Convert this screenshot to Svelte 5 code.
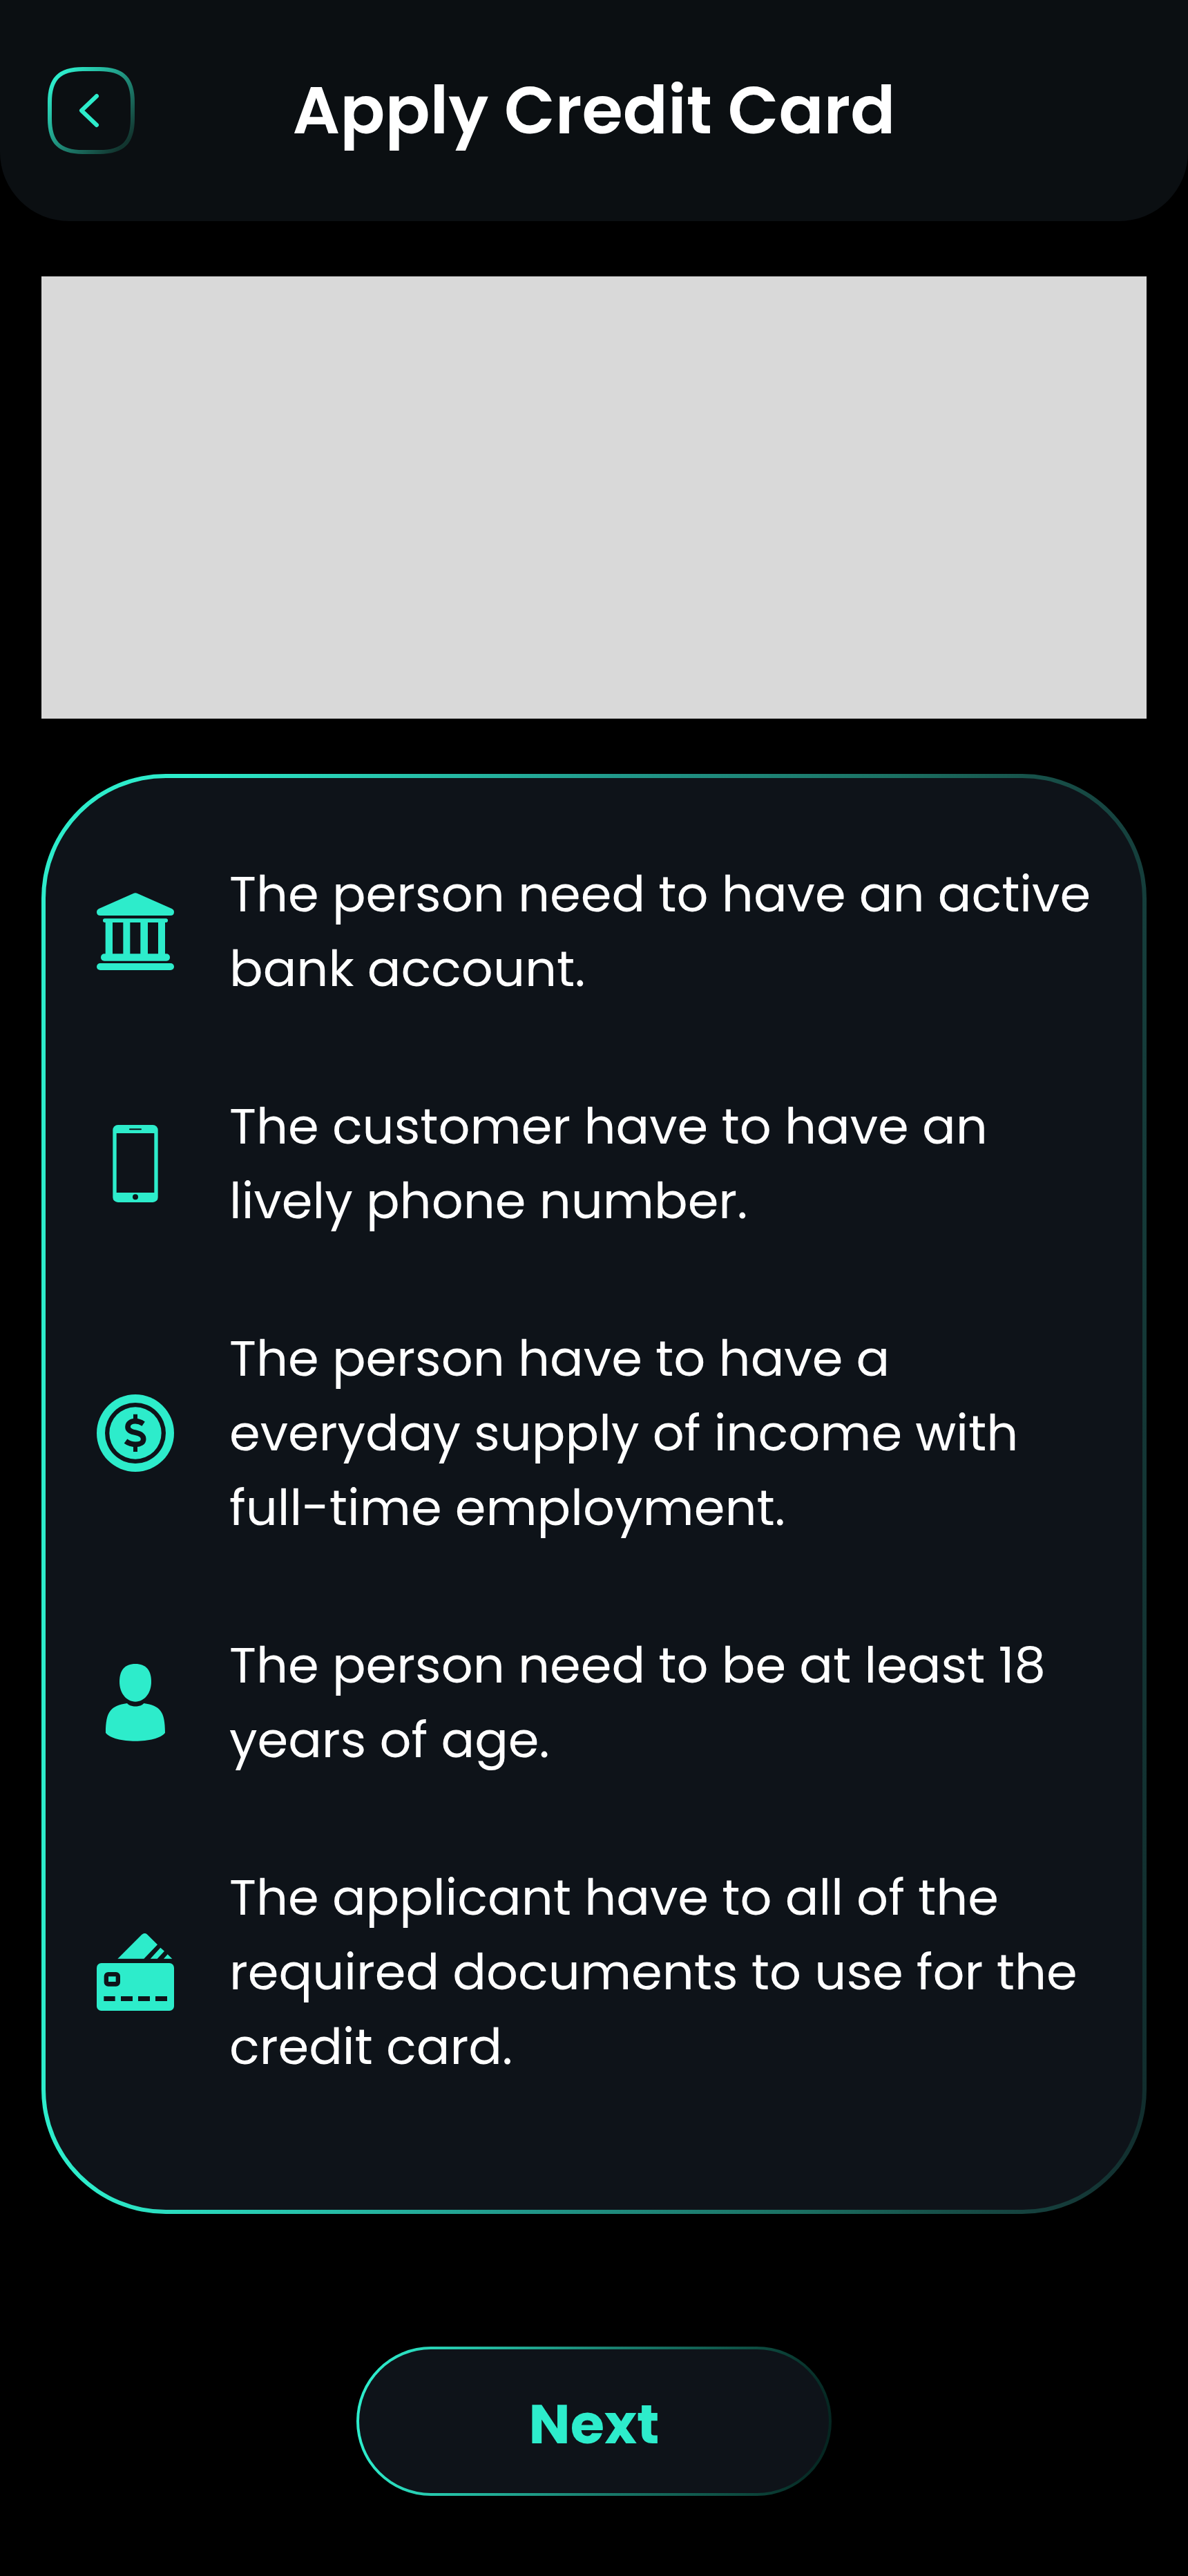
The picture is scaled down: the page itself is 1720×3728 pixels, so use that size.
<script>
  const requirements = [
    { icon: 'bank', text: 'The person need to have an active bank account.' },
    { icon: 'phone', text: 'The customer have to have an lively phone number.' },
    { icon: 'coin', text: 'The person have to have a everyday supply of income with full-time employment.' },
    { icon: 'person', text: 'The person need to be at least 18 years of age.' },
    { icon: 'card', text: 'The applicant have to all of the required documents to use for the credit card.' }
  ];
</script>

<div class="page">
  <header>
    <button class="back" type="button" aria-label="Back">
      <svg viewBox="0 0 126 126" fill="none" aria-hidden="true">
        <defs>
          <linearGradient id="back-edge" x1="0" y1="0" x2="1" y2="1">
            <stop offset="0.1" stop-color="#2deccb" />
            <stop offset="0.9" stop-color="#12352f" />
          </linearGradient>
        </defs>
        <path
          d="M3 51C3 17 17 3 51 3H75C109 3 123 17 123 51V75C123 109 109 123 75 123H51C17 123 3 109 3 75Z"
          stroke="url(#back-edge)"
          stroke-width="6"
        />
        <path d="M71 42L49 63L71 84" stroke="#2deccb" stroke-width="6" stroke-linecap="round" stroke-linejoin="round" />
      </svg>
    </button>
    <h1>Apply Credit Card</h1>
  </header>

  <main>
    <div class="banner"></div>

    <ul class="card">
      {#each requirements as item}
        <li>
          <svg class="icon" viewBox="0 0 336 336" aria-hidden="true">
            {#if item.icon === 'bank'}
              <path d="M161 2Q168 -1 175 2L326 69Q336 74 336 84Q336 99 320 99H16Q0 99 0 84Q0 74 10 69Z" />
              <rect x="27" y="112" width="282" height="17" rx="8" />
              <path d="M38 124H69V270H38ZM115 124H145V270H115ZM190 124H222V270H190ZM267 124H297V270H267Z" />
              <rect x="18" y="265" width="300" height="31" rx="15" />
              <rect y="306" width="336" height="30" rx="15" />
            {:else if item.icon === 'phone'}
              <rect x="70" width="196" height="336" rx="22" />
              <rect class="cut" x="86" y="36" width="164" height="258" />
              <rect class="cut" x="141" y="16" width="54" height="6" rx="3" />
              <circle class="cut" cx="168" cy="313" r="12" />
            {:else if item.icon === 'coin'}
              <circle cx="168" cy="168" r="168" />
              <circle class="cut" cx="168" cy="168" r="132" />
              <circle cx="168" cy="168" r="113" />
              <path class="cut" d="M159 86H177V114H159ZM159 220H177V249H159Z" />
              <path
                class="sign"
                d="M203 128C191 120 180 116 168 116C148 116 135 126 135 141C135 157 150 162 169 166C191 171 203 178 203 194C203 209 189 217 169 217C152 217 138 212 126 203"
              />
            {:else if item.icon === 'person'}
              <path d="M168 0C215 0 237 28 237 78C237 128 206 164 168 164C130 164 99 128 99 78C99 28 121 0 168 0Z" />
              <path d="M132 171C146 189 190 189 205 171C275 182 297 205 297 299C262 347 74 347 39 299C39 205 62 182 132 171Z" />
            {:else}
              <path d="M91 110L195 6Q208 -6 220 5L264 49L205 110ZM233 110L277 62L294 77L263 110ZM291 110L308 91L328 110Z" />
              <rect y="129" width="336" height="207" rx="20" />
              <rect class="cut" x="32" y="168" width="70" height="62" rx="18" />
              <rect x="51" y="187" width="32" height="23" />
              <path class="cut" d="M31 273H80V294H31ZM105 273H156V294H105ZM180 273H231V294H180ZM255 273H306V294H255Z" />
            {/if}
          </svg>
          <p>{item.text}</p>
        </li>
      {/each}
    </ul>

    <button class="next" type="button">Next</button>
  </main>
</div>

<style>
  :global(body) {
    margin: 0;
    background: #000;
  }

  .page {
    min-height: 100vh;
    box-sizing: border-box;
    padding-bottom: 116px;
    background: #000;
    color: #fff;
    font-family: Poppins, Inter, 'Liberation Sans', sans-serif;
  }

  header {
    display: grid;
    grid-template-columns: 1fr auto 1fr;
    align-items: center;
    min-height: 320px;
    box-sizing: border-box;
    padding: 0 69px;
    border-radius: 0 0 100px 100px;
    background: #0b0f12;
  }

  h1 {
    margin: 0;
    font-size: 96px;
    font-weight: 600;
    line-height: 144px;
  }

  button {
    border: 0;
    font-family: inherit;
    cursor: pointer;
  }

  .back {
    width: 126px;
    height: 126px;
    padding: 0;
    background: none;
  }

  .back svg {
    display: block;
    width: 100%;
  }

  main {
    display: flex;
    flex-direction: column;
    padding: 80px 60px 0;
  }

  .banner {
    aspect-ratio: 5 / 2;
    background: #d9d9d9;
  }

  .card {
    display: flex;
    flex-direction: column;
    gap: 120px;
    margin: 80px 0 192px;
    padding: 114px 72px 182px 74px;
    list-style: none;
    border: 6px solid transparent;
    border-radius: 180px;
    background:
      linear-gradient(#0e1319, #0e1319) padding-box,
      linear-gradient(94deg, #2deccb 12%, #21988a 48%, #1b7062 71%, #17524a 82%, #153c3a 93%, #112c2c) border-box;
  }

  li {
    display: flex;
    align-items: center;
    gap: 80px;
  }

  .icon {
    flex: none;
    width: 112px;
    height: 112px;
    fill: #2deccb;
  }

  .icon .cut {
    fill: #0e1319;
  }

  .icon .sign {
    fill: none;
    stroke: #0e1319;
    stroke-width: 23;
  }

  p {
    flex: 1;
    margin: 0;
    font-size: 72px;
    line-height: 108px;
  }

  .next {
    align-self: center;
    width: 688px;
    height: 216px;
    padding: 8px 0 0;
    border: 4px solid transparent;
    border-radius: 108px;
    background:
      linear-gradient(#0e1319, #0e1319) padding-box,
      linear-gradient(98deg, #2deccb 4%, #1a8070 52%, #0d4a3f 82%, #04201c) border-box;
    color: #2deccb;
    font-size: 80px;
    font-weight: 700;
    line-height: 120px;
  }
</style>
